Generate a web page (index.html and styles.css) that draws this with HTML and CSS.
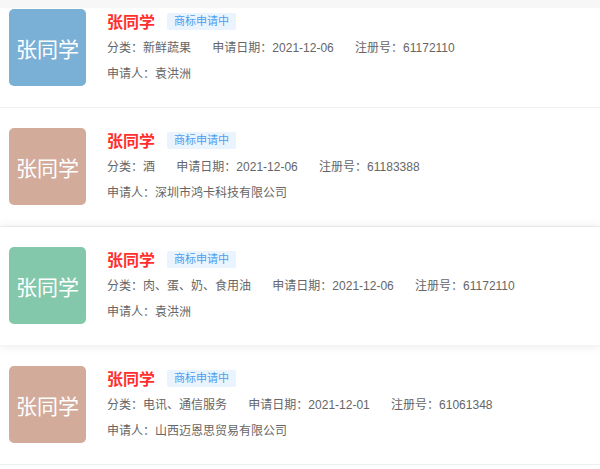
FILE: index.html
```html
<!DOCTYPE html>
<html lang="zh-CN">
<head>
    <meta charset="UTF-8">
    <meta name="viewport" content="width=device-width, initial-scale=1.0">
    <title>商标列表</title>
    <link rel="stylesheet" href="styles.css">
</head>
<body>
    <div class="topbar"></div>

    <div class="list">
        <div class="item item-cut">
            <div class="avatar blue">张同学</div>
            <div class="info">
                <div class="title-row">
                    <span class="name">张同学</span>
                    <span class="tag">商标申请中</span>
                </div>
                <div class="row">
                    <span class="field">分类：新鲜蔬果</span>
                    <span class="field">申请日期：2021-12-06</span>
                    <span class="field">注册号：61172110</span>
                </div>
                <div class="row">
                    <span class="field">申请人：袁洪洲</span>
                </div>
            </div>
        </div>

        <div class="item">
            <div class="avatar brown">张同学</div>
            <div class="info">
                <div class="title-row">
                    <span class="name">张同学</span>
                    <span class="tag">商标申请中</span>
                </div>
                <div class="row">
                    <span class="field">分类：酒</span>
                    <span class="field">申请日期：2021-12-06</span>
                    <span class="field">注册号：61183388</span>
                </div>
                <div class="row">
                    <span class="field">申请人：深圳市鸿卡科技有限公司</span>
                </div>
            </div>
        </div>

        <div class="item active">
            <div class="avatar green">张同学</div>
            <div class="info">
                <div class="title-row">
                    <span class="name">张同学</span>
                    <span class="tag">商标申请中</span>
                </div>
                <div class="row">
                    <span class="field">分类：肉、蛋、奶、食用油</span>
                    <span class="field">申请日期：2021-12-06</span>
                    <span class="field">注册号：61172110</span>
                </div>
                <div class="row">
                    <span class="field">申请人：袁洪洲</span>
                </div>
            </div>
        </div>

        <div class="item">
            <div class="avatar brown">张同学</div>
            <div class="info">
                <div class="title-row">
                    <span class="name">张同学</span>
                    <span class="tag">商标申请中</span>
                </div>
                <div class="row">
                    <span class="field">分类：电讯、通信服务</span>
                    <span class="field">申请日期：2021-12-01</span>
                    <span class="field">注册号：61061348</span>
                </div>
                <div class="row">
                    <span class="field">申请人：山西迈恩思贸易有限公司</span>
                </div>
            </div>
        </div>

        <div class="item next">
            <span class="mark"></span>
        </div>
    </div>
</body>
</html>
```

FILE: styles.css
```css
body {
    margin: 0;
    background-color: #fff;
    font-family: "Liberation Sans", "Noto Sans CJK SC", sans-serif;
    color: #666;
}
.topbar {
    height: 8px;
    background-color: #f7f7f7;
}
.list {
    display: flex;
    flex-direction: column;
}
.item {
    display: flex;
    padding: 20px 9px;
    background-color: #fff;
    border-bottom: 1px solid #f0f0f0;
    position: relative;
}
.item-cut {
    padding-top: 1px;
}
.item.active {
    z-index: 1;
    border-bottom-color: #f3f3f3;
    box-shadow: 0 0 10px rgba(0, 0, 0, 0.09);
}
.avatar {
    width: 77px;
    height: 77px;
    flex-shrink: 0;
    border-radius: 5px;
    color: #fff;
    font-size: 21px;
    display: flex;
    align-items: center;
    justify-content: center;
    font-family: "Noto Sans CJK SC", sans-serif;
}
.blue {
    background-color: #7bb0d6;
}
.brown {
    background-color: #d2ab9b;
}
.green {
    background-color: #83c8ab;
}
.info {
    margin-left: 21px;
    display: flex;
    flex-direction: column;
}
.title-row {
    height: 24px;
    display: flex;
    align-items: center;
    margin-bottom: 2px;
}
.name {
    font-size: 16px;
    font-weight: bold;
    color: #ff2f2f;
    font-family: "Noto Sans CJK SC", sans-serif;
}
.tag {
    margin-left: 12px;
    height: 17px;
    line-height: 17px;
    padding: 0 7px;
    font-size: 11px;
    color: #4d9ef0;
    background-color: #e9f4fe;
    border-radius: 2px;
}
.row {
    height: 26px;
    line-height: 26px;
    font-size: 12px;
    white-space: nowrap;
}
.field {
    margin-right: 18px;
}
.next {
    height: 40px;
    padding: 0;
    border-bottom: none;
}
.mark {
    position: absolute;
    top: 7px;
    left: 543px;
    width: 11px;
    height: 2px;
    background-color: #f04060;
}
```
